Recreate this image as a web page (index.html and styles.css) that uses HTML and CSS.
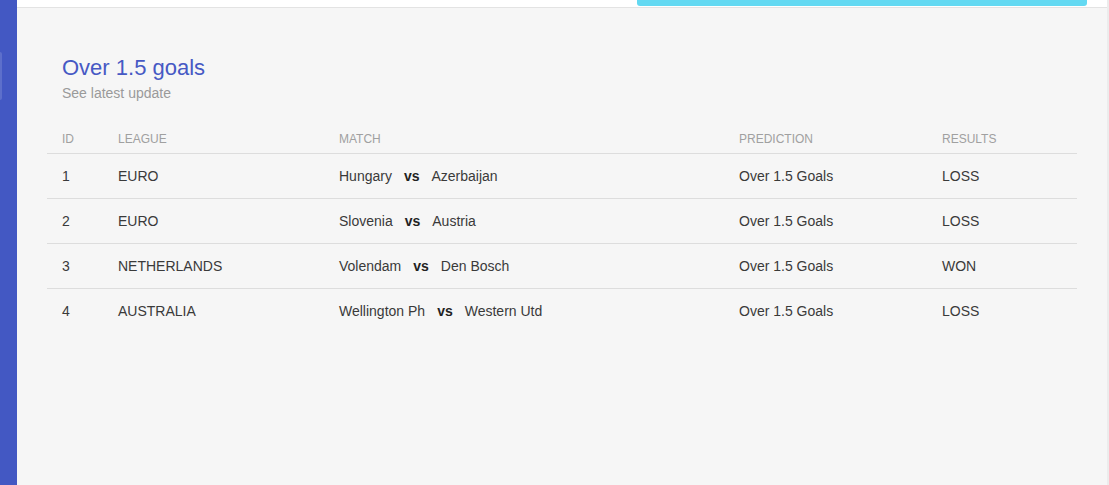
FILE: index.html
```html
<!DOCTYPE html>
<html lang="en">
<head>
<meta charset="utf-8">
<title>Over 1.5 goals</title>
<link rel="stylesheet" href="styles.css">
</head>
<body>
<aside class="sidebar"><span class="sidebar-tab"></span></aside>
<main class="main">
  <div class="topbar"><div class="topbar-accent"></div></div>
  <section class="content">
    <div class="card-header">
      <h4 class="card-title">Over 1.5 goals</h4>
      <p class="card-category">See latest update</p>
    </div>
    <table class="table">
      <colgroup>
        <col class="c-id"><col class="c-league"><col class="c-match"><col class="c-pred"><col class="c-res">
      </colgroup>
      <thead>
        <tr><th>ID</th><th>League</th><th>Match</th><th>Prediction</th><th>Results</th></tr>
      </thead>
      <tbody>
        <tr><td>1</td><td>EURO</td><td>Hungary<span class="vs">vs</span>Azerbaijan</td><td>Over 1.5 Goals</td><td>LOSS</td></tr>
        <tr><td>2</td><td>EURO</td><td>Slovenia<span class="vs">vs</span>Austria</td><td>Over 1.5 Goals</td><td>LOSS</td></tr>
        <tr><td>3</td><td>NETHERLANDS</td><td>Volendam<span class="vs">vs</span>Den Bosch</td><td>Over 1.5 Goals</td><td>WON</td></tr>
        <tr><td>4</td><td>AUSTRALIA</td><td>Wellington Ph<span class="vs">vs</span>Western Utd</td><td>Over 1.5 Goals</td><td>LOSS</td></tr>
      </tbody>
    </table>
  </section>
</main>
</body>
</html>
```
FILE: styles.css
```css
html, body {
  margin: 0;
  padding: 0;
  height: 100%;
}
body {
  display: flex;
  font-family: "Liberation Sans", Arial, sans-serif;
  background: #f6f6f6;
  overflow: hidden;
}
.sidebar {
  position: relative;
  width: 17px;
  flex: 0 0 17px;
  background: #4358c3;
}
.sidebar-tab {
  position: absolute;
  left: 0;
  top: 52px;
  width: 2px;
  height: 48px;
  border-radius: 0 3px 3px 0;
  background: rgba(255, 255, 255, 0.14);
}
.main {
  flex: 1;
  min-width: 0;
  background: #f6f6f6;
  border-right: 2px solid #ececec;
}
.topbar {
  height: 7px;
  background: #fff;
  border-bottom: 1px solid #e3e3e3;
  display: flex;
  justify-content: flex-end;
  padding-right: 20px;
}
.topbar-accent {
  width: 450px;
  height: 6px;
  background: #63d9f2;
  border-radius: 0 0 3px 3px;
}
.content {
  padding: 47px 30px 0;
}
.card-header {
  padding: 0 15px;
}
.card-title {
  margin: 0;
  font-size: 22px;
  line-height: 26px;
  font-weight: 400;
  color: #4659c4;
}
.card-category {
  margin: 2px 0 0;
  font-size: 14px;
  line-height: 20px;
  color: #9a9a9a;
}
.table {
  width: 100%;
  margin-top: 15px;
  border-collapse: collapse;
  table-layout: fixed;
}
.c-id { width: 56px; }
.c-league { width: 221px; }
.c-match { width: 400px; }
.c-pred { width: 203px; }
.c-res { width: 150px; }
.table th {
  text-align: left;
  font-weight: 400;
  font-size: 12px;
  line-height: 17px;
  text-transform: uppercase;
  color: #a0a0a0;
  padding: 13px 15px 5px;
  border-bottom: 1px solid #dddddd;
}
.table td {
  font-size: 14px;
  line-height: 20px;
  color: #3a3a3a;
  padding: 12px 15px;
  border-bottom: 1px solid #dddddd;
  white-space: nowrap;
}
.table tbody tr:last-child td {
  border-bottom: none;
}
.vs {
  font-weight: 700;
  color: #222;
  margin: 0 12px;
}
```
